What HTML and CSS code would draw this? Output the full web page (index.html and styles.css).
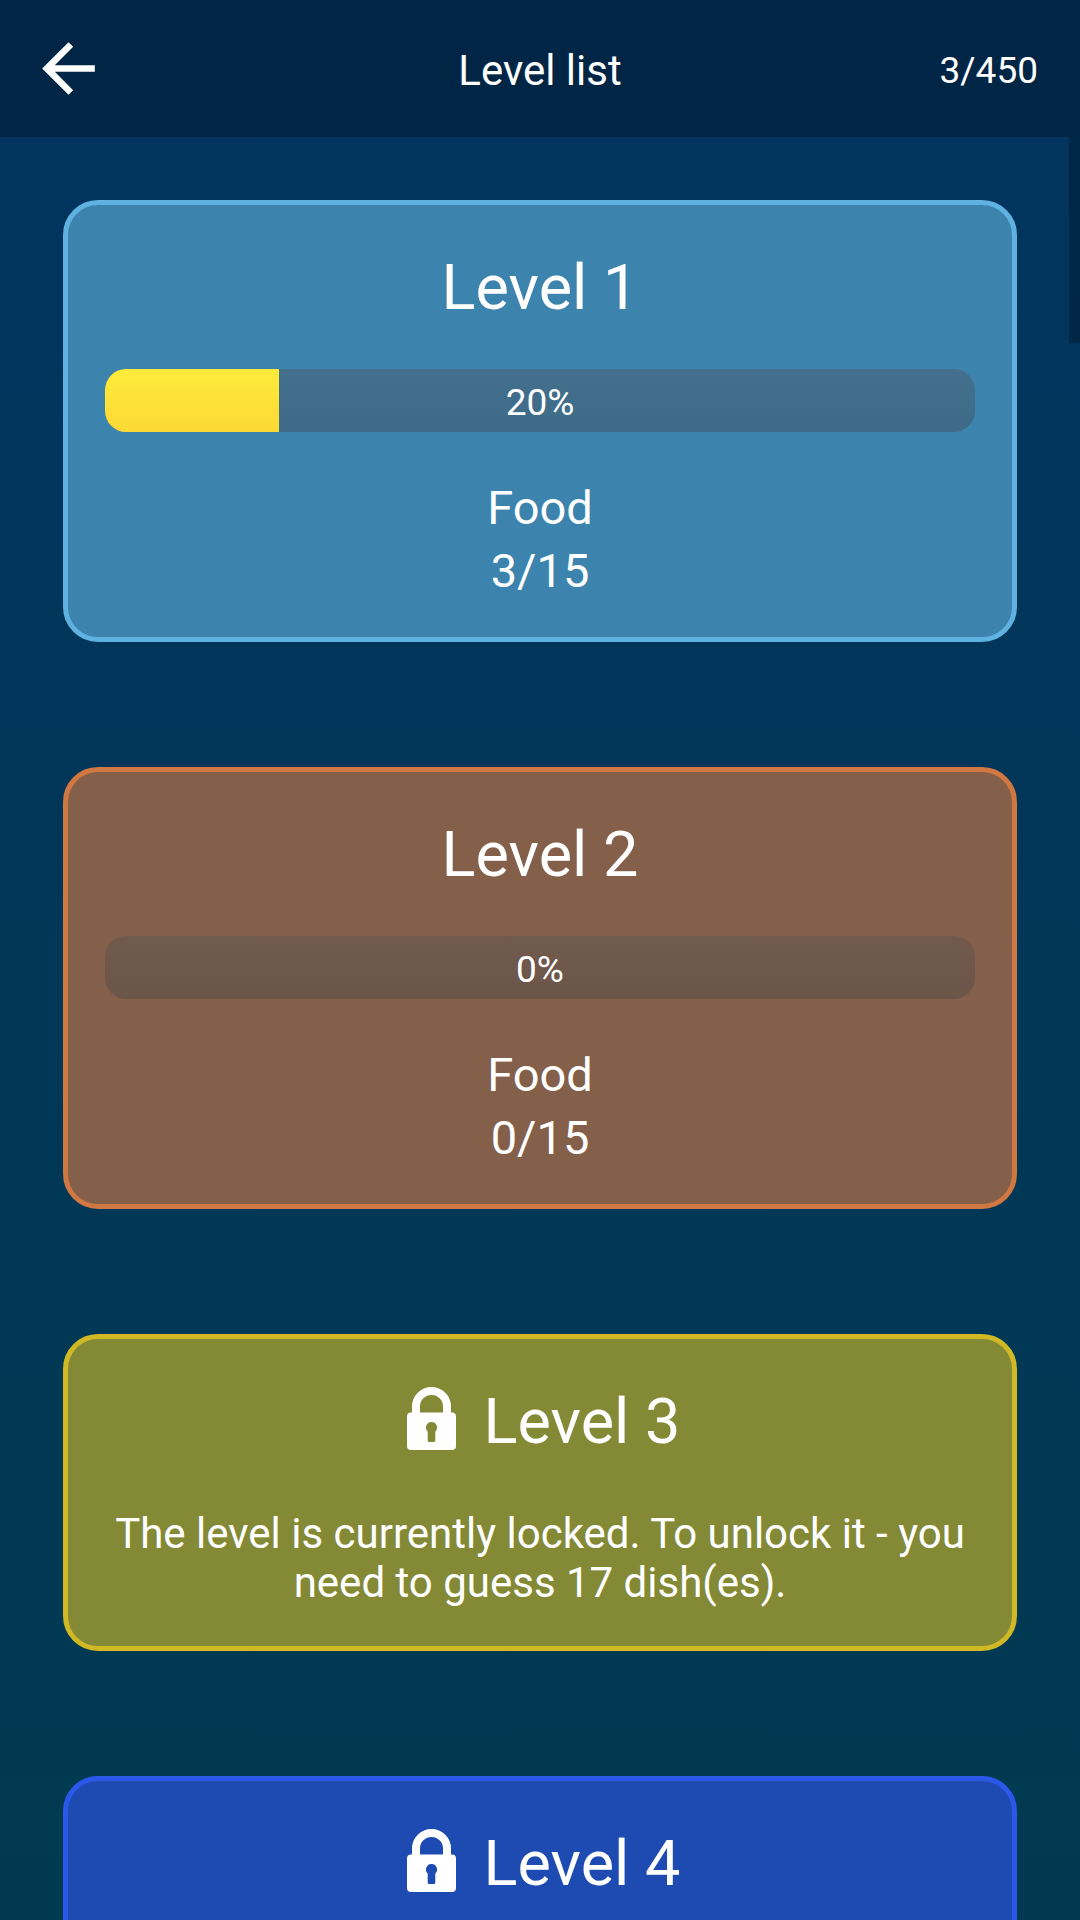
FILE: index.html
```html
<!DOCTYPE html>
<html lang="en">
<head>
  <meta charset="UTF-8" />
  <meta name="viewport" content="width=device-width, initial-scale=1" />
  <title>Level list</title>
  <link rel="stylesheet" href="styles.css">
</head>
<body>
  <svg class="defs" aria-hidden="true">
    <symbol id="lock" viewBox="0 0 63 63">
      <path d="M16 28V19.500a15.500 15.500 0 0 1 31 0V28" fill="none" stroke="#fff" stroke-width="8" />
      <path fill="#fff" fill-rule="evenodd" d="M11 25.500H52a4 4 0 0 1 4 4V59a4 4 0 0 1-4 4H11a4 4 0 0 1-4-4V29.500a4 4 0 0 1 4-4zM31.500 35a5.500 5.500 0 0 0-3.800 9.500V53.500a1.500 1.500 0 0 0 1.500 1.500H33.800a1.500 1.500 0 0 0 1.500-1.500V44.500A5.500 5.500 0 0 0 31.500 35z" />
    </symbol>
  </svg>
  <header class="header">
    <button class="back" type="button" aria-label="Back">
      <svg viewBox="0 0 24 24" aria-hidden="true">
        <path fill="#fff" d="M20 11H7.830l5.590-5.590L12 4l-8 8 8 8 1.410-1.410L7.830 13H20v-2z" />
      </svg>
    </button>
    <h1 class="header-title">Level list</h1>
    <span class="header-count">3/450</span>
  </header>
  <main class="list">
    <section class="card blue">
      <h2 class="card-title">Level 1</h2>
      <div class="progress" role="progressbar" aria-label="Level 1" aria-valuemin="0" aria-valuemax="100" aria-valuenow="20">
        <div class="progress-fill" style="width: 20%"></div>
        <span class="progress-text">20%</span>
      </div>
      <p class="stats">Food<br>3/15</p>
    </section>
    <section class="card orange">
      <h2 class="card-title">Level 2</h2>
      <div class="progress" role="progressbar" aria-label="Level 2" aria-valuemin="0" aria-valuemax="100" aria-valuenow="0">
        <div class="progress-fill" style="width: 0%"></div>
        <span class="progress-text">0%</span>
      </div>
      <p class="stats">Food<br>0/15</p>
    </section>
    <section class="card yellow">
      <h2 class="card-title"><svg class="lock" aria-hidden="true"><use href="#lock" /></svg>Level 3</h2>
      <p class="message">The level is currently locked. To unlock it - you need to guess 17 dish(es).</p>
    </section>
    <section class="card indigo">
      <h2 class="card-title"><svg class="lock" aria-hidden="true"><use href="#lock" /></svg>Level 4</h2>
      <p class="message"></p>
    </section>
  </main>
  <div class="scroll-thumb"></div>
</body>
</html>
```
FILE: styles.css
```css
* {
  box-sizing: border-box;
}
body {
  display: flex;
  flex-direction: column;
  height: 100vh;
  margin: 0;
  overflow: hidden;
  background: linear-gradient(#023460, #013a50);
  color: #fff;
  font-family: Roboto, sans-serif;
}
h1, h2, p {
  margin: 0;
  font-weight: 400;
}
.defs {
  display: none;
}
.header {
  display: grid;
  grid-template-columns: 1fr auto 1fr;
  align-items: center;
  flex: none;
  height: 137px;
  padding: 0 42px;
  background: rgba(0, 0, 0, 0.27);
}
.back {
  width: 79px;
  height: 79px;
  margin-left: -13px;
  padding: 0;
  border: 0;
  background: none;
  cursor: pointer;
}
.back svg {
  display: block;
  width: 79px;
  height: 79px;
}
.header-title {
  padding-top: 3px;
  font-size: 42px;
}
.header-count {
  padding-top: 3px;
  font-size: 37px;
  text-align: right;
}
.list {
  flex: 1;
  min-height: 0;
  padding: 63px;
  overflow-y: auto;
  scrollbar-width: none;
}
.card {
  margin-bottom: 125px;
  padding: 37px 37px 35px;
  border: 5px solid;
  border-radius: 35px;
  text-align: center;
}
.blue {
  background: #3c83ae;
  border-color: #5fb1e0;
}
.orange {
  background: #84604b;
  border-color: #d17842;
}
.yellow {
  background: #848936;
  border-color: #d0b925;
}
.indigo {
  background: #1e4bb2;
  border-color: #2c58ea;
}
.card-title {
  display: flex;
  align-items: center;
  justify-content: center;
  gap: 21px;
  font-size: 63px;
  line-height: 92px;
}
.lock {
  width: 63px;
  height: 63px;
  margin-bottom: 7px;
}
.progress {
  display: grid;
  height: 63px;
  margin-top: 35px;
  overflow: hidden;
  border-radius: 21px;
  background: linear-gradient(rgba(80, 78, 82, 0.36), rgba(64, 64, 68, 0.36));
}
.progress-fill,
.progress-text {
  grid-area: 1 / 1;
}
.progress-fill {
  background: linear-gradient(#ffeb3b, #fdd835);
}
.progress-text {
  padding-top: 2px;
  font-size: 37px;
  line-height: 63px;
}
.stats {
  margin-top: 44px;
  font-size: 47px;
  line-height: 63px;
}
.message {
  min-height: 98px;
  margin: 41px 0 4px;
  font-size: 42px;
  line-height: 49px;
}
.scroll-thumb {
  position: absolute;
  top: 137px;
  right: 0;
  width: 11px;
  height: 206px;
  background: rgba(0, 0, 0, 0.25);
}
```
